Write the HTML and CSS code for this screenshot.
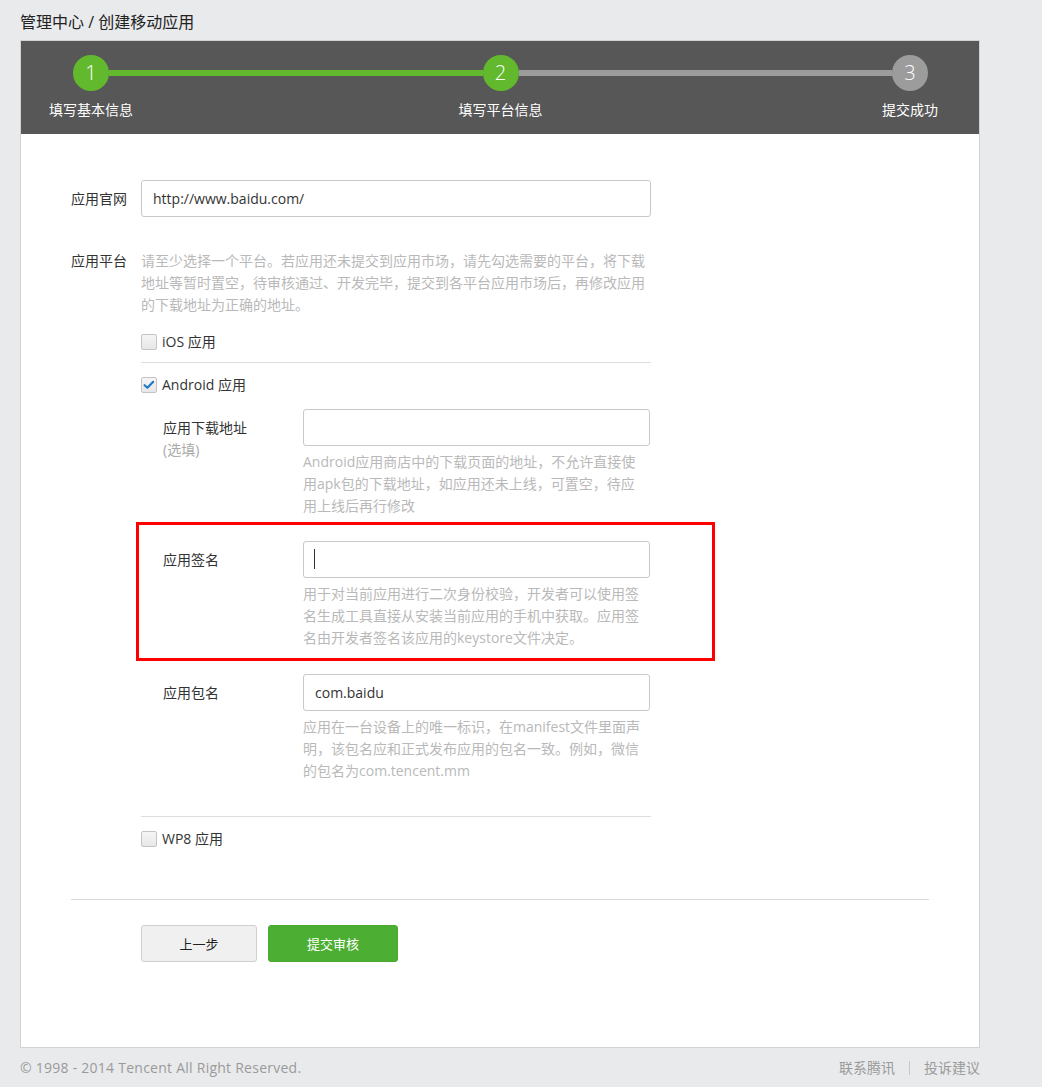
FILE: index.html
```html
<!DOCTYPE html>
<html lang="zh-CN">
<head>
<meta charset="utf-8">
<title>创建移动应用</title>
<link rel="stylesheet" href="styles.css">
</head>
<body>
<div class="page">
  <div class="crumb">管理中心 / 创建移动应用</div>
  <div class="card">
    <div class="steps">
      <div class="step on"><span class="dot">1</span><span class="name">填写基本信息</span></div>
      <div class="bar on"></div>
      <div class="step on"><span class="dot">2</span><span class="name">填写平台信息</span></div>
      <div class="bar"></div>
      <div class="step"><span class="dot">3</span><span class="name">提交成功</span></div>
    </div>
    <div class="form">
      <div class="row url-row">
        <div class="label">应用官网</div>
        <input class="input wide" type="text" value="http://www.baidu.com/">
      </div>
      <div class="row platform-row">
        <div class="label">应用平台</div>
        <div class="platform">
          <div class="hint">请至少选择一个平台。若应用还未提交到应用市场，请先勾选需要的平台，将下载<br>地址等暂时置空，待审核通过、开发完毕，提交到各平台应用市场后，再修改应用<br>的下载地址为正确的地址。</div>
          <div class="opt opt-ios">
            <label class="check"><span class="cb"></span>iOS 应用</label>
          </div>
          <div class="opt opt-android">
            <label class="check"><span class="cb checked"><svg viewBox="0 0 16 16" width="16" height="16"><path d="M3.6 8.2 L6.4 10.8 L12.2 4.8" fill="none" stroke="#1f78c8" stroke-width="2.2" stroke-linecap="round" stroke-linejoin="round"/></svg></span>Android 应用</label>
            <div class="subform">
              <div class="sub-row">
                <div class="sub-label">应用下载地址<br><span class="optional">(选填)</span></div>
                <div class="sub-field">
                  <input class="input" type="text" value="">
                  <div class="hint">Android应用商店中的下载页面的地址，不允许直接使<br>用apk包的下载地址，如应用还未上线，可置空，待应<br>用上线后再行修改</div>
                </div>
              </div>
              <div class="sub-row mark">
                <div class="sub-label">应用签名</div>
                <div class="sub-field">
                  <div class="caret-wrap"><input class="input" type="text" value=""></div>
                  <div class="hint">用于对当前应用进行二次身份校验，开发者可以使用签<br>名生成工具直接从安装当前应用的手机中获取。应用签<br>名由开发者签名该应用的keystore文件决定。</div>
                </div>
              </div>
              <div class="sub-row last">
                <div class="sub-label">应用包名</div>
                <div class="sub-field">
                  <input class="input" type="text" value="com.baidu">
                  <div class="hint">应用在一台设备上的唯一标识，在manifest文件里面声<br>明，该包名应和正式发布应用的包名一致。例如，微信<br>的包名为com.tencent.mm</div>
                </div>
              </div>
            </div>
          </div>
          <div class="opt opt-wp">
            <label class="check"><span class="cb"></span>WP8 应用</label>
          </div>
        </div>
      </div>
      <div class="actions">
        <button class="btn btn-prev" type="button">上一步</button>
        <button class="btn btn-submit" type="button">提交审核</button>
      </div>
    </div>
  </div>
  <div class="footer">
    <span class="copy">© 1998 - 2014 Tencent All Right Reserved.</span>
    <span class="links"><a>联系腾讯</a><i class="sep"></i><a>投诉建议</a></span>
  </div>
</div>
</body>
</html>
```

FILE: styles.css
```css
* { box-sizing: border-box; }
body {
  margin: 0;
  background: #e9eaec;
  font-family: "Open Sans", "Noto Sans CJK SC", sans-serif;
  font-size: 14px;
  color: #333;
}
.page { width: 960px; margin-left: 20px; }
.crumb {
  height: 40px;
  padding-top: 12px;
  font-size: 16px;
  line-height: 20px;
  color: #222;
}
.card {
  background: #fff;
  border: 1px solid #d2d2d2;
}
.steps {
  background: #575757;
  height: 93px;
  padding: 14px 51px 0 52px;
  display: flex;
  align-items: flex-start;
}
.step {
  width: 36px;
  flex: none;
  display: flex;
  flex-direction: column;
  align-items: center;
}
.dot {
  width: 36px;
  height: 36px;
  border-radius: 50%;
  background: #9c9c9c;
  color: #fff;
  font-size: 20px;
  font-weight: 300;
  line-height: 36px;
  text-align: center;
}
.step.on .dot { background: #62b92e; }
.name {
  margin-top: 9px;
  white-space: nowrap;
  color: #fff;
  font-size: 14px;
  line-height: 20px;
}
.bar {
  flex: 1;
  height: 6px;
  margin-top: 15px;
  background: #9c9c9c;
}
.bar.on { background: #62b92e; }

.form { padding: 46px 50px 85px; }
.row { display: flex; }
.label { width: 70px; flex: none; color: #333; }
.url-row .label { line-height: 37px; }
.input {
  display: block;
  width: 347px;
  height: 37px;
  border: 1px solid #c9c9c9;
  border-radius: 3px;
  padding: 0 11px;
  font: 14px "Open Sans", "Noto Sans CJK SC", sans-serif;
  color: #333;
  background: #fff;
  outline: none;
}
.input.wide { width: 510px; }
.platform-row { margin-top: 33px; }
.platform-row .label { line-height: 22px; }
.platform { width: 510px; }
.hint {
  color: #b9b9b9;
  line-height: 22px;
  white-space: nowrap;
}
.opt-ios {
  padding: 15px 0 9px;
  border-bottom: 1px solid #dedede;
}
.opt-android {
  padding: 11px 0 34px;
  border-bottom: 1px solid #dedede;
}
.opt-wp { padding-top: 11px; }
.check {
  display: flex;
  align-items: center;
  line-height: 22px;
  color: #333;
}
.cb {
  width: 16px;
  height: 16px;
  margin-right: 5px;
  border: 1px solid #c4c4c4;
  border-radius: 2px;
  background: linear-gradient(#f5f5f5, #e7e7e7);
  display: flex;
  align-items: center;
  justify-content: center;
}
.cb svg { display: block; margin: -1px; }
.subform { margin: 13px 0 0 22px; }
.sub-row { display: flex; margin-bottom: 24px; }
.sub-row.last { margin-bottom: 0; margin-top: 25px; }
.sub-label {
  width: 140px;
  flex: none;
  padding-top: 8px;
  line-height: 22px;
  color: #333;
}
.optional { color: #aaa; }
.sub-field { width: 347px; }
.sub-field .hint { margin-top: 5px; }
.mark { position: relative; }
.mark::after {
  content: "";
  position: absolute;
  top: -19px;
  left: -27px;
  right: -64px;
  bottom: -12px;
  border: 3px solid #f00;
  pointer-events: none;
}
.caret-wrap { position: relative; }
.caret-wrap::after {
  content: "";
  position: absolute;
  left: 11px;
  top: 8px;
  width: 1px;
  height: 20px;
  background: #333;
}
.actions {
  margin-top: 49px;
  border-top: 1px solid #d9d9d9;
  padding: 25px 0 0 70px;
  display: flex;
  gap: 11px;
}
.btn {
  height: 37px;
  border-radius: 3px;
  font: 13px "Open Sans", "Noto Sans CJK SC", sans-serif;
  cursor: pointer;
}
.btn-prev {
  width: 116px;
  border: 1px solid #cfcfcf;
  background: #f0f0f0;
  color: #222;
}
.btn-submit {
  width: 130px;
  border: 1px solid #48a82f;
  background: #4cae33;
  color: #fff;
}
.footer {
  display: flex;
  justify-content: space-between;
  align-items: center;
  margin-top: 10px;
  line-height: 20px;
  color: #9a9a9a;
  font-size: 14px;
}
.copy {
  font-family: "Open Sans", "Noto Sans CJK SC", sans-serif;
  letter-spacing: 0.25px;
}
.links { display: flex; align-items: center; }
.links a { color: #9a9a9a; }
.sep {
  width: 1px;
  height: 14px;
  background: #c8c8c8;
  margin: 0 14px;
}
```
